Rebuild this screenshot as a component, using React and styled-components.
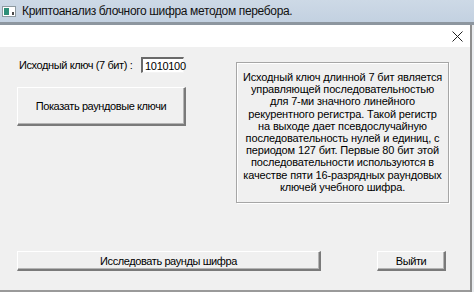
import React from 'react';
import styled, { createGlobalStyle } from 'styled-components';

const GlobalStyle = createGlobalStyle`
  html, body {
    margin: 0;
    padding: 0;
    background: #dfe3e8;
  }
`;

// Outer window
const Window = styled.div`
  width: 474px;
  height: 292px;
  display: flex;
  flex-direction: column;
  background: #e9ecef;
  overflow: hidden;
  font-family: "Liberation Sans", Arial, sans-serif;
`;

const TitleBar = styled.div`
  height: 22px;
  display: flex;
  align-items: center;
  gap: 6px;
  padding-left: 2px;
  background: linear-gradient(#cdd9e6, #c3d1e1);
  border-bottom: 3px solid #8d969f;
`;

const TitleText = styled.span`
  font-size: 12px;
  letter-spacing: -0.35px;
  color: #111;
  white-space: nowrap;
`;

const Frame = styled.div`
  flex: 1;
  display: flex;
  flex-direction: column;
  margin-right: 2px;
  border-right: 2px solid #8f8f8f;
`;

const CaptionBar = styled.div`
  height: 22px;
  display: flex;
  align-items: center;
  justify-content: flex-end;
  padding-right: 7px;
  background: #ffffff;
`;

const Body = styled.div`
  flex: 1;
  background: #f0f0f0;
  padding: 10px 0 0 17px;
  border-bottom: 2px solid #9a9a9a;
`;

const Top = styled.div`
  display: flex;
  align-items: flex-start;
`;

const LeftCol = styled.div`
  width: 169px;
  display: flex;
  flex-direction: column;
`;

const KeyRow = styled.div`
  height: 16px;
  display: flex;
  align-items: center;
  padding-left: 2px;
`;

const Label = styled.span`
  width: 122px;
  font-size: 11px;
  letter-spacing: -0.4px;
  color: #000;
  white-space: nowrap;
`;

const KeyInput = styled.div`
  width: 43px;
  height: 16px;
  box-sizing: border-box;
  background: #fff;
  border-style: solid;
  border-width: 2px 1px 1px 2px;
  border-color: #6a6a6a #f4f4f4 #f4f4f4 #6a6a6a;
  font-size: 11px;
  letter-spacing: -0.3px;
  padding-left: 1px;
  display: flex;
  align-items: center;
`;

const Caret = styled.span`
  width: 1px;
  height: 11px;
  margin-right: 1px;
  background: #000;
`;

const Button = styled.div`
  width: ${({ w }) => w}px;
  height: ${({ h }) => h}px;
  margin-top: ${({ mt }) => mt || 0}px;
  box-sizing: border-box;
  display: flex;
  align-items: center;
  justify-content: center;
  background: #f0f0f0;
  border-style: solid;
  border-width: 1px 2px 2px 1px;
  border-color: #ffffff #7a7a7a #7a7a7a #ffffff;
  box-shadow: inset -1px -1px 0 #b4b4b4;
  font-size: 11px;
  letter-spacing: -0.4px;
  color: #000;
  white-space: nowrap;
`;

const InfoBox = styled.div`
  width: 213px;
  height: 141px;
  margin: 5px 0 0 50px;
  box-sizing: border-box;
  border: 1px solid #a6a6a6;
  box-shadow: 1px 1px 0 #ffffff, inset 1px 1px 0 #ffffff;
  padding-top: 8px;
  font-size: 11px;
  line-height: 12.2px;
  letter-spacing: -0.15px;
  text-align: center;
  color: #000;
`;

const BottomRow = styled.div`
  display: flex;
  gap: 56px;
  margin-top: 48px;
`;

const AppIcon = () => (
  <svg width="14" height="11" viewBox="0 0 14 11">
    <rect x="0.5" y="0.5" width="13" height="10" fill="#fff" stroke="#8e9aa0" />
    <rect x="2" y="2" width="5" height="7" fill="#2f8f78" />
    <rect x="10" y="6" width="2" height="3" fill="#4a4a4a" />
  </svg>
);

const CloseIcon = () => (
  <svg width="11" height="11" viewBox="0 0 11 11">
    <path d="M0.5 0.5 L10.5 10.5 M10.5 0.5 L0.5 10.5" stroke="#222" strokeWidth="1" />
  </svg>
);

const infoLines = [
  'Исходный ключ длинной 7 бит является',
  'управляющей последовательностью',
  'для 7-ми значного линейного',
  'рекурентного регистра. Такой регистр',
  'на выходе дает псевдослучайную',
  'последовательность нулей и единиц, с',
  'периодом 127 бит. Первые 80 бит этой',
  'последовательности используются в',
  'качестве пяти 16-разрядных раундовых',
  'ключей учебного шифра.',
];

export default function App() {
  return (
    <>
      <GlobalStyle />
      <Window>
        <TitleBar>
          <AppIcon />
          <TitleText>Криптоанализ блочного шифра методом перебора.</TitleText>
        </TitleBar>
        <Frame>
          <CaptionBar>
            <CloseIcon />
          </CaptionBar>
          <Body>
            <Top>
              <LeftCol>
                <KeyRow>
                  <Label>Исходный ключ (7 бит) :</Label>
                  <KeyInput>
                    <Caret />
                    1010100
                  </KeyInput>
                </KeyRow>
                <Button w={169} h={39} mt={14}>Показать раундовые ключи</Button>
              </LeftCol>
              <InfoBox>
                {infoLines.map((line) => (
                  <div key={line}>{line}</div>
                ))}
              </InfoBox>
            </Top>
            <BottomRow>
              <Button w={304} h={20}>Исследовать раунды шифра</Button>
              <Button w={69} h={20}>Выйти</Button>
            </BottomRow>
          </Body>
        </Frame>
      </Window>
    </>
  );
}
